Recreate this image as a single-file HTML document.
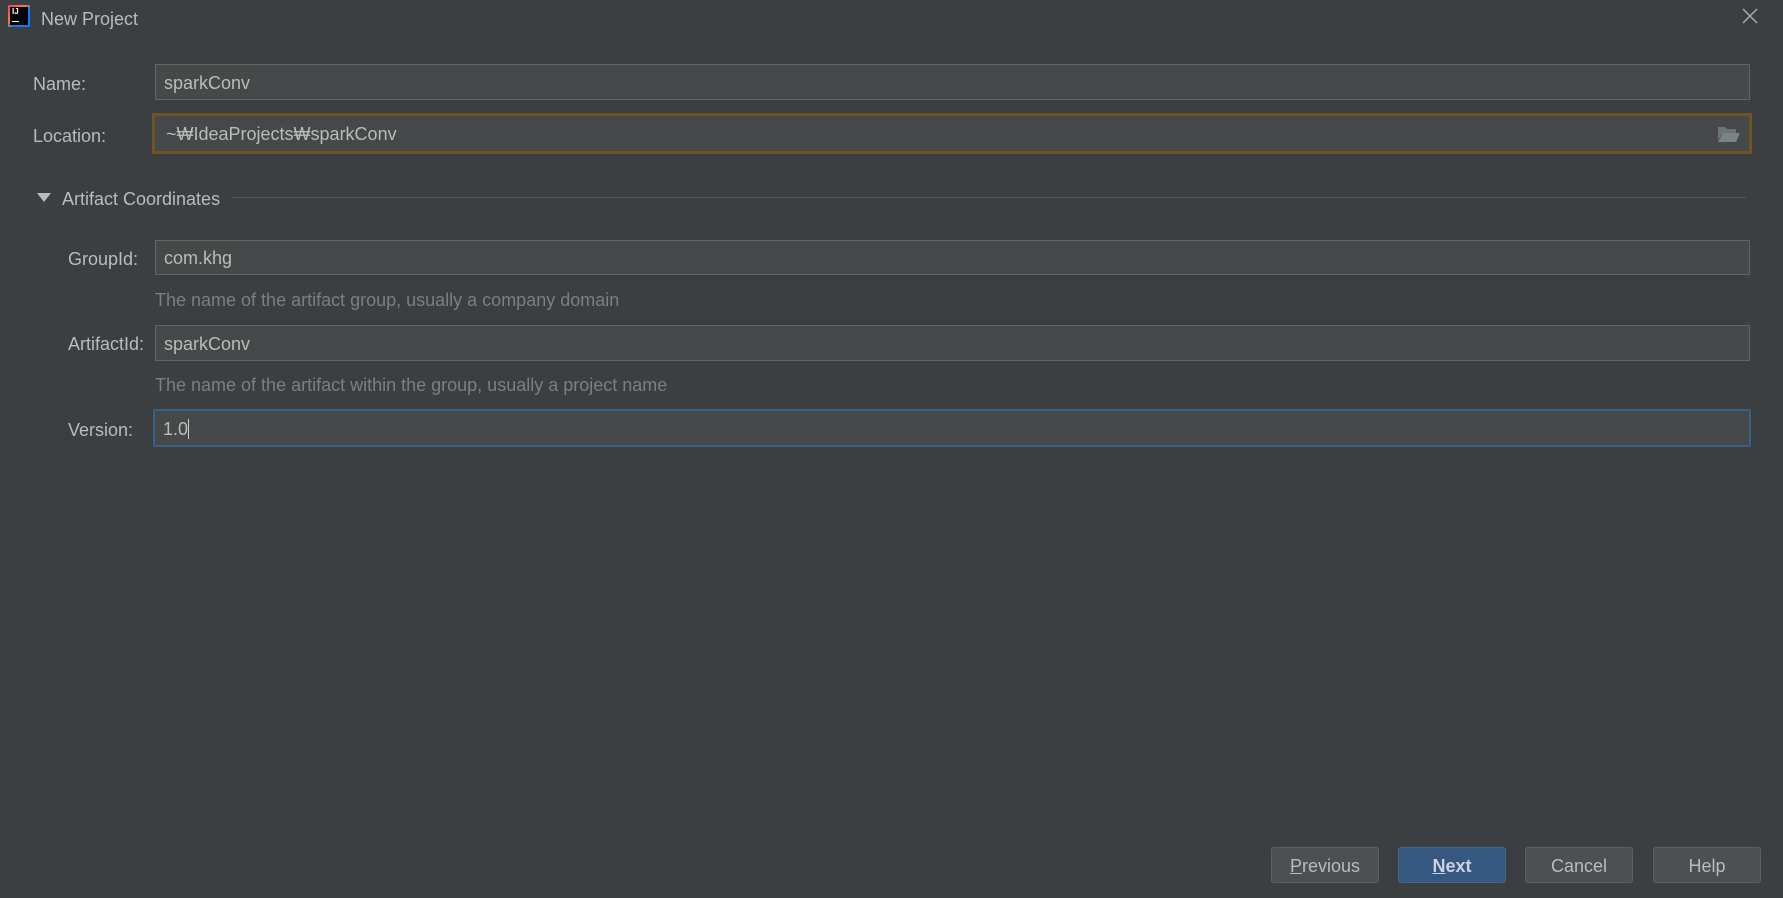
<!DOCTYPE html>
<html><head><style>
body{margin:0;width:1783px;height:898px;background:#3c3f41;font-family:"Liberation Sans","Noto Sans CJK KR",sans-serif;color:#bbbbbb;position:relative;overflow:hidden;font-size:18px}
.a{position:absolute}
.f{position:absolute;background:#45494a;border:1px solid #646464;box-sizing:border-box;padding-left:8px;padding-top:2px;display:flex;align-items:center;color:#bbbbbb;font-size:18px}
.l{position:absolute;font-size:18px}
.h{position:absolute;color:#7c7e80;font-size:18px}
.b{position:absolute;top:847px;height:36px;width:108px;box-sizing:border-box;border:1px solid #5e6060;border-radius:3px;background:#4c5052;display:flex;align-items:center;justify-content:center;font-size:18px;padding-top:3px}
</style></head><body>
<div class="a" style="left:8px;top:5px;width:22px;height:22px;background:linear-gradient(135deg,#ff318c,#fc801d 40%,#087cfa 60%,#087cfa)"></div>
<div class="a" style="left:10px;top:7px;width:18px;height:18px;background:#000;color:#fff;font-size:8px;font-weight:bold;line-height:9px;padding-left:2px;box-sizing:border-box">IJ<div style="width:7px;height:1px;background:#fff;margin-top:5px"></div></div>
<div class="l" style="left:41px;top:9px">New Project</div>
<svg class="a" style="left:1742px;top:8px" width="16" height="16"><path d="M1 1L15 15M15 1L1 15" stroke="#aaa" stroke-width="1.5"/></svg>
<div class="l" style="left:33px;top:74px">Name:</div>
<div class="f" style="left:155px;top:64px;width:1595px;height:36px">sparkConv</div>
<div class="l" style="left:33px;top:126px">Location:</div>
<div class="f" style="left:152px;top:113px;width:1600px;height:41px;border:3px solid #6e5325;padding-left:11px">~₩IdeaProjects₩sparkConv</div>
<svg class="a" style="left:1717px;top:125px" width="24" height="18"><path d="M1 2h7l2 2h9v4H6L1 15z" fill="#6e7577"/><path d="M6 8h17l-4 9H1z" fill="#7a8385"/></svg>
<svg class="a" style="left:37px;top:193px" width="14" height="10"><path d="M0 0h14L7 9z" fill="#bbb"/></svg>
<div class="l" style="left:62px;top:189px">Artifact Coordinates</div>
<div class="a" style="left:231px;top:197px;width:1515px;height:1px;background:#555"></div>
<div class="l" style="left:68px;top:249px">GroupId:</div>
<div class="f" style="left:155px;top:240px;width:1595px;height:35px">com.khg</div>
<div class="h" style="left:155px;top:290px">The name of the artifact group, usually a company domain</div>
<div class="l" style="left:68px;top:334px">ArtifactId:</div>
<div class="f" style="left:155px;top:325px;width:1595px;height:36px">sparkConv</div>
<div class="h" style="left:155px;top:375px">The name of the artifact within the group, usually a project name</div>
<div class="l" style="left:68px;top:420px">Version:</div>
<div class="f" style="left:153px;top:409px;width:1598px;height:38px;border:2px solid #3d6185">1.0<span style="display:inline-block;width:1px;height:20px;background:#ccc"></span></div>
<div class="b" style="left:1271px"><u>P</u>revious</div>
<div class="b" style="left:1398px;background:#365880;border-color:#43688c;font-weight:bold;color:#c9d3dd"><u>N</u>ext</div>
<div class="b" style="left:1525px">Cancel</div>
<div class="b" style="left:1653px">Help</div>
</body></html>
